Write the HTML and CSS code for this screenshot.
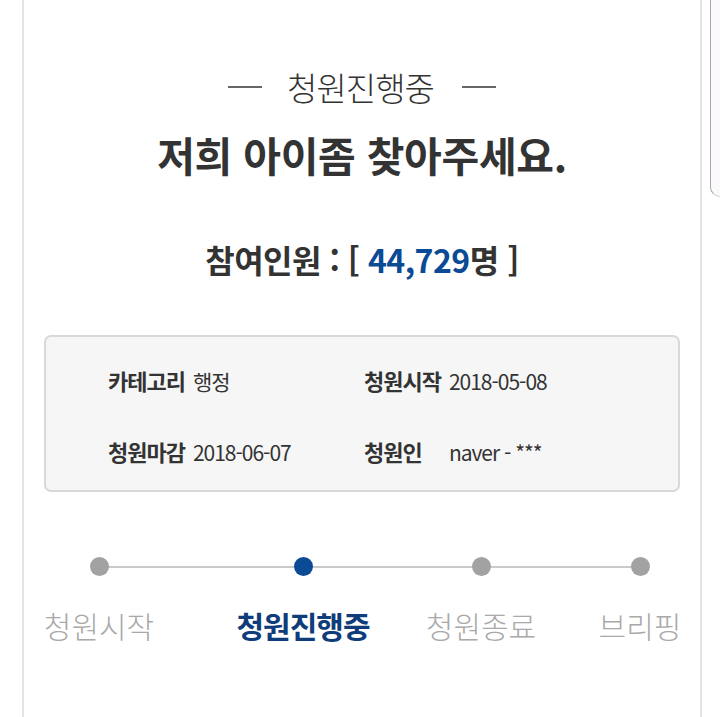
FILE: index.html
```html
<!DOCTYPE html>
<html lang="ko">
<head>
  <meta charset="UTF-8">
  <title>청원진행중</title>
  <link rel="stylesheet" href="styles.css">
</head>
<body>
  <div class="pagina">
    <div class="painel">
      <p class="estado">청원진행중</p>
      <h1 class="titulo">저희 아이좀 찾아주세요.</h1>
      <p class="participantes">참여인원 : [ <span class="numero">44,729</span>명 ]</p>

      <div class="cartao">
        <div class="campo"><span class="rotulo">카테고리</span> 행정</div>
        <div class="campo"><span class="rotulo">청원시작</span> 2018-05-08</div>
        <div class="campo"><span class="rotulo">청원마감</span> 2018-06-07</div>
        <div class="campo"><span class="rotulo">청원인</span> naver - ***</div>
      </div>

      <div class="etapas">
        <div class="etapa"><span class="ponto"></span><span class="nome">청원시작</span></div>
        <div class="etapa atual"><span class="ponto"></span><span class="nome">청원진행중</span></div>
        <div class="etapa"><span class="ponto"></span><span class="nome">청원종료</span></div>
        <div class="etapa"><span class="ponto"></span><span class="nome">브리핑</span></div>
      </div>
    </div>
    <div class="lateral"></div>
  </div>
</body>
</html>
```

FILE: styles.css
```css
body {
  margin: 0;
  background-color: #fff;
  font-family: "Noto Sans CJK KR", "Noto Sans", sans-serif;
  color: #333;
}

.pagina {
  display: flex;
  align-items: flex-start;
}

.painel {
  margin-left: 22px;
  width: 680px;
  min-height: 717px;
  box-sizing: border-box;
  border-left: 2px solid #e5e3e5;
  border-right: 2px solid #e5e3e5;
  padding: 67px 20px 0;
}

.lateral {
  margin-left: 8px;
  width: 10px;
  height: 196px;
  background-color: #fcf9fc;
  border-left: 1px solid #a8a8a8;
  border-bottom: 1px solid #cfcfcf;
  border-bottom-left-radius: 10px;
}

.estado {
  display: flex;
  justify-content: center;
  align-items: center;
  margin: 0;
  font-size: 33px;
  font-weight: 300;
  line-height: 40px;
  letter-spacing: -1px;
  color: #333;
}

.estado::before,
.estado::after {
  content: "";
  width: 34px;
  height: 2px;
  background-color: #666;
}

.estado::before {
  margin-right: 25px;
}

.estado::after {
  margin-left: 28px;
}

.titulo {
  margin: 22px 0 0;
  text-align: center;
  font-size: 41px;
  font-weight: bold;
  line-height: 50px;
  letter-spacing: -0.3px;
  color: #333;
}

.participantes {
  margin: 59px 0 0;
  text-align: center;
  font-size: 32px;
  font-weight: bold;
  line-height: 42px;
  letter-spacing: -0.5px;
  color: #333;
}

.numero {
  color: #0b4a94;
}

.cartao {
  display: grid;
  grid-template-columns: 256px 1fr;
  row-gap: 40px;
  margin-top: 55px;
  padding: 28px 20px 23px 62px;
  background-color: #f6f6f6;
  border: 2px solid #d9d9d9;
  border-radius: 7px;
}

.campo {
  font-size: 21px;
  line-height: 30px;
  letter-spacing: -1px;
  color: #333;
}

.rotulo {
  display: inline-block;
  min-width: 80px;
  font-size: 22px;
  font-weight: bold;
}

.etapas {
  position: relative;
  display: grid;
  grid-template-columns: 204px 178px 159px 100px;
  margin: 65px 0 0 5px;
}

.etapas::before {
  content: "";
  position: absolute;
  left: 49px;
  top: 9px;
  width: 540px;
  height: 2px;
  background-color: #c9c9c9;
}

.etapa {
  position: relative;
  width: 100px;
  display: flex;
  flex-direction: column;
  align-items: center;
}

.ponto {
  width: 19px;
  height: 19px;
  border-radius: 50%;
  background-color: #a2a2a2;
}

.nome {
  margin-top: 31px;
  font-size: 30px;
  font-weight: 300;
  line-height: 36px;
  white-space: nowrap;
  color: #a9a9a9;
}

.etapa.atual .ponto {
  background-color: #0b4a94;
}

.etapa.atual .nome {
  font-size: 30px;
  font-weight: bold;
  letter-spacing: -1px;
  color: #0f3c7a;
}
```
